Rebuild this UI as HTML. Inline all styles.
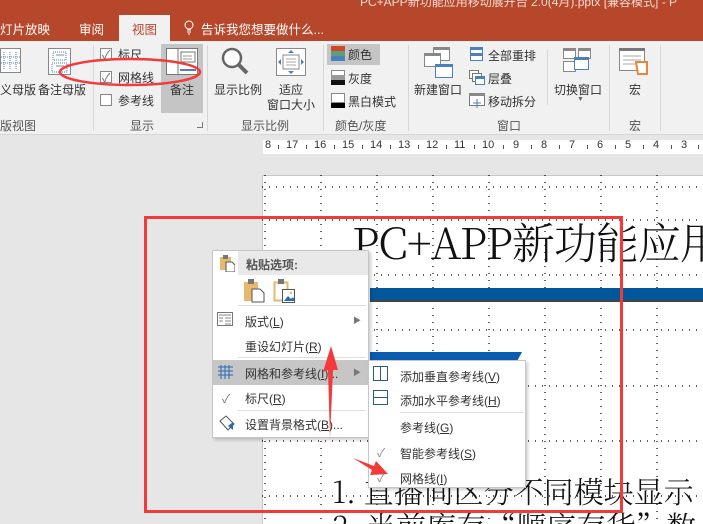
<!DOCTYPE html>
<html><head><meta charset="utf-8"><style>
*{margin:0;padding:0;box-sizing:border-box}
html,body{width:703px;height:524px;overflow:hidden}
body{position:relative;background:#e6e6e6;font-family:"Liberation Sans","Noto Sans CJK SC",sans-serif;font-size:12px;color:#333}
.a{position:absolute;white-space:nowrap}
.top{left:0;top:0;width:703px;height:41px;background:#b7472a}
.rib{left:0;top:41px;width:703px;height:94px;background:#f1f1f1;border-bottom:1px solid #d6d6d6}
.sep{position:absolute;top:45px;width:1px;height:86px;background:#d6d6d6}
.gl{color:#555;top:117px}
.cb{position:absolute;width:12px;height:12px;border:1px solid #888;background:#fff}
.mi{position:absolute;font-size:12px;color:#333}
.u{text-decoration:underline}
.rn{position:absolute;top:139px;font-size:11px;color:#333}
.rt{position:absolute;top:145px;width:1px;height:4px;background:#555}
.sl{font-family:"Noto Serif CJK SC","Liberation Serif",serif;font-weight:300;color:#111}
</style></head><body>
<div class="a top"></div>
<div class="a" style="left:360px;top:-7px;color:#f4dcd5;font-size:12px">PC+APP新功能应用移动展开台 2.0(4月).pptx [兼容模式] - P</div>
<div class="a" style="left:0;top:19px;color:#fff;font-size:12.5px">灯片放映</div>
<div class="a" style="left:79px;top:19px;color:#fff;font-size:12.5px">审阅</div>
<div class="a" style="left:119px;top:15px;width:51px;height:27px;background:#f1f1f1"></div>
<div class="a" style="left:132px;top:19px;color:#b7472a;font-size:12.5px">视图</div>
<svg class="a" style="left:184px;top:20px" width="10" height="16"><circle cx="5" cy="5" r="4" fill="none" stroke="#fff"/><path d="M3 10h4M3 12h4M4 14h2" stroke="#fff"/></svg>
<div class="a" style="left:201px;top:19px;color:#fff;font-size:12.5px">告诉我您想要做什么...</div>
<div class="a rib"></div>
<svg class="a" style="left:0;top:48px" width="22" height="26"><rect x="0.5" y="0.5" width="20" height="24" fill="#fff" stroke="#888"/><path d="M4 4v18M10 4v18M16 4v18M1 9h19M1 15h19" stroke="#4a7fc0" stroke-dasharray="1 1"/></svg>
<svg class="a" style="left:48px;top:48px" width="24" height="28"><rect x="0.5" y="0.5" width="22" height="26" fill="#fff" stroke="#888"/><path d="M5 4h13v8H5zM4 15h15v9H4z" fill="none" stroke="#4a7fc0" stroke-dasharray="1 1"/><path d="M8 7h8M8 18h8" stroke="#888"/></svg>
<div class="a" style="left:0;top:81px">义母版</div>
<div class="a" style="left:38px;top:81px">备注母版</div>
<div class="a gl" style="left:0">版视图</div>
<div class="sep" style="left:93px"></div>
<div class="cb" style="left:100px;top:48px"></div><div class="a" style="left:102px;top:46px;color:#666">✓</div><div class="a" style="left:118px;top:46px">标尺</div>
<div class="cb" style="left:100px;top:71px"></div><div class="a" style="left:102px;top:69px;color:#666">✓</div><div class="a" style="left:118px;top:69px">网格线</div>
<div class="cb" style="left:100px;top:94px"></div><div class="a" style="left:118px;top:92px">参考线</div>
<div class="a" style="left:161px;top:44px;width:42px;height:69px;background:#c5c5c5"></div>
<svg class="a" style="left:166px;top:48px" width="32" height="28"><rect x="0.5" y="0.5" width="31" height="26" fill="#fff" stroke="#777"/><path d="M12 0v27" stroke="#777"/><rect x="15" y="4" width="14" height="10" fill="none" stroke="#777"/><path d="M17 8h9M17 11h9" stroke="#999"/><path d="M14 22h16" stroke="#4a7fc0" stroke-width="2"/></svg>
<div class="a" style="left:170px;top:81px">备注</div>
<div class="a gl" style="left:130px">显示</div>
<div class="a" style="left:197px;top:122px;width:6px;height:6px;border-right:1px solid #777;border-bottom:1px solid #777"></div>
<div class="sep" style="left:207px"></div>
<svg class="a" style="left:220px;top:46px" width="30" height="32"><circle cx="12" cy="12" r="9" fill="#fff" stroke="#666" stroke-width="2.5"/><path d="M18 18l9 9" stroke="#666" stroke-width="4"/></svg>
<div class="a" style="left:214px;top:81px">显示比例</div>
<svg class="a" style="left:276px;top:48px" width="30" height="28"><rect x="0.5" y="0.5" width="29" height="27" fill="#fff" stroke="#888"/><rect x="7" y="7" width="16" height="14" fill="none" stroke="#888"/><path d="M10 11h10M10 14h10M10 17h10" stroke="#aaa"/><path d="M15 2l-3 3h6zM15 26l-3-3h6zM2 14l3-3v6zM28 14l-3-3v6z" fill="#4a7fc0"/></svg>
<div class="a" style="left:279px;top:81px">适应</div>
<div class="a" style="left:267px;top:96px">窗口大小</div>
<div class="a gl" style="left:241px">显示比例</div>
<div class="sep" style="left:323px"></div>
<div class="a" style="left:327px;top:44px;width:53px;height:21px;background:#c5c5c5"></div>
<svg class="a" style="left:331px;top:46px" width="14" height="16"><rect width="14" height="5" fill="#d24726"/><rect y="5" width="14" height="5" fill="#5e9e7e"/><rect y="10" width="14" height="5" fill="#4a7fc0"/></svg>
<div class="a" style="left:348px;top:46px">颜色</div>
<svg class="a" style="left:331px;top:70px" width="14" height="16"><rect x=".5" y=".5" width="13" height="5" fill="#fff" stroke="#888"/><rect y="5" width="14" height="5" fill="#999"/><rect y="10" width="14" height="5" fill="#111"/></svg>
<div class="a" style="left:348px;top:70px">灰度</div>
<svg class="a" style="left:331px;top:93px" width="14" height="16"><rect x=".5" y=".5" width="13" height="9" fill="#fff" stroke="#888"/><rect y="10" width="14" height="5" fill="#000"/></svg>
<div class="a" style="left:348px;top:93px">黑白模式</div>
<div class="a gl" style="left:335px">颜色/灰度</div>
<div class="sep" style="left:408px"></div>
<svg class="a" style="left:424px;top:47px" width="30" height="32"><rect x="9.5" y=".5" width="16" height="13" fill="#fff" stroke="#888"/><rect x="9" y="0" width="17" height="3" fill="#888"/><rect x=".5" y="6.5" width="16" height="13" fill="#fff" stroke="#888"/><rect y="6" width="17" height="3" fill="#888"/><rect x="11.5" y="17.5" width="17" height="13" fill="#fff" stroke="#4a7fc0"/><rect x="11" y="17" width="18" height="3" fill="#4a7fc0"/></svg>
<div class="a" style="left:414px;top:81px">新建窗口</div>
<svg class="a" style="left:470px;top:47px" width="13" height="14"><rect x=".5" y=".5" width="12" height="13" fill="#fff" stroke="#4a7fc0"/><rect y="0" width="13" height="3" fill="#4a7fc0"/><rect y="6" width="13" height="3" fill="#4a7fc0"/></svg>
<div class="a" style="left:488px;top:47px">全部重排</div>
<svg class="a" style="left:469px;top:70px" width="16" height="16"><rect x=".5" y=".5" width="9" height="8" fill="#fff" stroke="#777"/><rect x="3.5" y="3.5" width="9" height="8" fill="#fff" stroke="#777"/><rect x="6.5" y="6.5" width="9" height="8" fill="#fff" stroke="#4a7fc0"/><rect x="6" y="6" width="10" height="3" fill="#4a7fc0"/></svg>
<div class="a" style="left:488px;top:70px">层叠</div>
<svg class="a" style="left:469px;top:93px" width="16" height="16"><rect x=".5" y=".5" width="15" height="12" fill="#fff" stroke="#777"/><rect width="16" height="3" fill="#888"/><path d="M8 6v9M4 10h8" stroke="#4a7fc0"/></svg>
<div class="a" style="left:488px;top:93px">移动拆分</div>
<div class="a gl" style="left:497px">窗口</div>
<div class="sep" style="left:547px;top:50px;height:55px"></div>
<svg class="a" style="left:563px;top:48px" width="30" height="28"><rect x=".5" y=".5" width="12" height="10" fill="#fff" stroke="#888"/><rect width="13" height="3" fill="#888"/><rect x="15.5" y=".5" width="12" height="10" fill="#fff" stroke="#888"/><rect x="15" width="13" height="3" fill="#888"/><rect x=".5" y="13.5" width="12" height="10" fill="#fff" stroke="#888"/><rect x="11.5" y="9.5" width="14" height="12" fill="#fff" stroke="#4a7fc0"/><rect x="11" y="9" width="15" height="3" fill="#4a7fc0"/></svg>
<div class="a" style="left:554px;top:81px">切换窗口</div>
<div class="a" style="left:577px;top:96px;font-size:7px;color:#666">▼</div>
<div class="sep" style="left:609px"></div>
<svg class="a" style="left:619px;top:48px" width="32" height="30"><rect x=".5" y=".5" width="25" height="22" fill="#fff" stroke="#888"/><rect width="26" height="3" fill="#777"/><path d="M4 8h18M4 12h18M4 16h18" stroke="#aaa"/><path d="M17 14h11v12h-9z" fill="#fff" stroke="#e8873a" stroke-width="2"/></svg>
<div class="a" style="left:629px;top:81px">宏</div>
<div class="a gl" style="left:629px">宏</div>
<div class="sep" style="left:660px"></div>
<!-- ruler -->
<div class="a" style="left:263px;top:140px;width:440px;height:14px;background:#fff"></div>
<span class="rn" style="left:265px">8</span>
<span class="rn" style="left:286px">17</span><span class="rn" style="left:314px">16</span><span class="rn" style="left:342px">15</span><span class="rn" style="left:370px">14</span><span class="rn" style="left:398px">13</span><span class="rn" style="left:426px">12</span><span class="rn" style="left:454px">11</span><span class="rn" style="left:482px">10</span><span class="rn" style="left:513px">9</span><span class="rn" style="left:541px">8</span><span class="rn" style="left:569px">7</span><span class="rn" style="left:597px">6</span><span class="rn" style="left:625px">5</span><span class="rn" style="left:653px">4</span><span class="rn" style="left:681px">3</span>
<span class="rt" style="left:278px"></span><span class="rt" style="left:306px"></span><span class="rt" style="left:334px"></span><span class="rt" style="left:362px"></span><span class="rt" style="left:390px"></span><span class="rt" style="left:418px"></span><span class="rt" style="left:446px"></span><span class="rt" style="left:474px"></span><span class="rt" style="left:503px"></span><span class="rt" style="left:531px"></span><span class="rt" style="left:559px"></span><span class="rt" style="left:587px"></span><span class="rt" style="left:615px"></span><span class="rt" style="left:643px"></span><span class="rt" style="left:671px"></span><span class="rt" style="left:698px"></span>
<!-- slide -->
<div class="a" style="left:262px;top:175px;width:441px;height:349px;background:#fff;border-left:1px solid #c8c8c8;border-top:1px solid #c8c8c8"></div>
<svg class="a" style="left:262px;top:175px" width="441" height="349">
<g stroke="#000" stroke-width="1.2" stroke-dasharray="1 6">
<path d="M3 0v349M59 0v349M115 0v349M171 0v349M227 0v349M283 0v349M339 0v349M395 0v349"/>
<path d="M0 12h441M0 45h441M0 100h441M0 155h441M0 211h441M0 266h441M0 321h441"/>
</g>
<rect x="108" y="113" width="333" height="12" fill="#02569a"/>
<rect x="108" y="125" width="333" height="2" fill="#444"/>
<path d="M108 177h152l-6 11H108z" fill="#0a5cb0"/>
</svg>
<div class="a sl" style="left:352px;top:214px;font-size:43px;letter-spacing:-1px;line-height:56px">PC+APP新功能应用</div>
<div class="a sl" style="left:332px;top:470px;font-size:30px;line-height:40px">1. 直播间区分不同模块显示</div>
<div class="a sl" style="left:332px;top:505px;font-size:30px;line-height:40px">2. 当前库存“顺序存货”数</div>
<!-- red rect -->
<div class="a" style="left:144px;top:216px;width:479px;height:297px;border:3px solid #f23a3a"></div>
<!-- context menu -->
<div class="a" style="left:212px;top:250px;width:157px;height:188px;background:#fff;border:1px solid #c6c6c6;box-shadow:2px 2px 3px rgba(0,0,0,.2)"></div>
<div class="a" style="left:238px;top:251px;width:130px;height:24px;background:#e9e9e9"></div>
<svg class="a" style="left:219px;top:254px" width="16" height="18"><rect x="1" y="3" width="11" height="13" fill="#e5b96f"/><rect x="4" y="1" width="5" height="4" fill="#777"/><path d="M7 8h6l3 3v7H7z" fill="#fff" stroke="#555"/></svg>
<div class="mi" style="left:246px;top:256px;font-weight:bold;color:#555">粘贴选项:</div>
<svg class="a" style="left:243px;top:279px" width="24" height="24"><rect x="1" y="3" width="14" height="19" fill="#e5b96f"/><rect x="5" y="0" width="6" height="5" fill="#777"/><path d="M9 10h8l4 4v9H9z" fill="#fff" stroke="#555"/></svg>
<svg class="a" style="left:273px;top:279px" width="24" height="24"><rect x="1.5" y="3.5" width="13" height="18" fill="none" stroke="#e5b96f" stroke-width="2"/><rect x="5" y="0" width="6" height="5" fill="#777"/><rect x="9.5" y="10.5" width="12" height="13" fill="#fff" stroke="#555"/><path d="M11 22l4-5 3 3 2-2 2 4z" fill="#2a6ab0"/><circle cx="18" cy="14" r="1.2" fill="#e5b96f"/></svg>
<div class="a" style="left:238px;top:305px;width:128px;height:1px;background:#ddd"></div>
<svg class="a" style="left:217px;top:312px" width="16" height="14"><rect x=".5" y=".5" width="15" height="13" fill="#fff" stroke="#777"/><path d="M2 3h12M2 6h4M8 6h6M8 9h6M8 12h6M2 9h4" stroke="#888"/></svg>
<div class="mi" style="left:245px;top:313px">版式(<span class="u">L</span>)</div>
<div class="a" style="left:353px;top:315px;font-size:8px;color:#777">▶</div>
<div class="mi" style="left:245px;top:338px">重设幻灯片(<span class="u">R</span>)</div>
<div class="a" style="left:238px;top:357px;width:128px;height:1px;background:#ddd"></div>
<div class="a" style="left:213px;top:360px;width:155px;height:25px;background:#c6c6c6"></div>
<svg class="a" style="left:218px;top:365px" width="15" height="14"><path d="M0 2h15M0 6h15M0 10h15M3 0v14M7 0v14M11 0v14" stroke="#2a6ab0"/></svg>
<div class="mi" style="left:245px;top:365px">网格和参考线(<span class="u">I</span>)...</div>
<div class="a" style="left:353px;top:367px;font-size:8px;color:#777">▶</div>
<div class="a" style="left:222px;top:390px;color:#777">✓</div>
<div class="mi" style="left:245px;top:390px">标尺(<span class="u">R</span>)</div>
<div class="a" style="left:238px;top:410px;width:128px;height:1px;background:#ddd"></div>
<svg class="a" style="left:218px;top:414px" width="18" height="18"><path d="M2 7l6-5 8 8-6 6z" fill="#fff" stroke="#555"/><path d="M10 12l5-4v8z" fill="#2a6ab0"/></svg>
<div class="mi" style="left:245px;top:416px">设置背景格式(<span class="u">B</span>)...</div>
<!-- submenu -->
<div class="a" style="left:368px;top:360px;width:158px;height:128px;background:#fff;border:1px solid #c6c6c6;box-shadow:2px 2px 3px rgba(0,0,0,.2)"></div>
<svg class="a" style="left:373px;top:366px" width="16" height="16"><rect x=".5" y=".5" width="14" height="14" fill="none" stroke="#2a5a90"/><path d="M7.5 0v15" stroke="#2a5a90"/></svg>
<div class="mi" style="left:400px;top:368px">添加垂直参考线(<span class="u">V</span>)</div>
<svg class="a" style="left:373px;top:390px" width="16" height="16"><rect x=".5" y=".5" width="14" height="14" fill="none" stroke="#2a5a90"/><path d="M0 7.5h15" stroke="#2a5a90"/></svg>
<div class="mi" style="left:400px;top:392px">添加水平参考线(<span class="u">H</span>)</div>
<div class="a" style="left:400px;top:412px;width:124px;height:1px;background:#ddd"></div>
<div class="mi" style="left:400px;top:419px">参考线(<span class="u">G</span>)</div>
<div class="a" style="left:377px;top:444px;color:#888">✓</div>
<div class="mi" style="left:400px;top:445px">智能参考线(<span class="u">S</span>)</div>
<div class="a" style="left:377px;top:469px;color:#888">✓</div>
<div class="mi" style="left:400px;top:470px">网格线(<span class="u">I</span>)</div>
<svg class="a" style="left:0;top:0" width="703" height="524">
<ellipse cx="130" cy="72" rx="70" ry="13" fill="none" stroke="#f23a3a" stroke-width="2.5"/>
<path d="M330 438L328 370L323 372L331 346L338 370L333 370z" fill="#f23a3a"/>
<path d="M353 458L374 466L376 461L388 474L370 475L372 470z" fill="#f23a3a"/>
</svg>
</body></html>
